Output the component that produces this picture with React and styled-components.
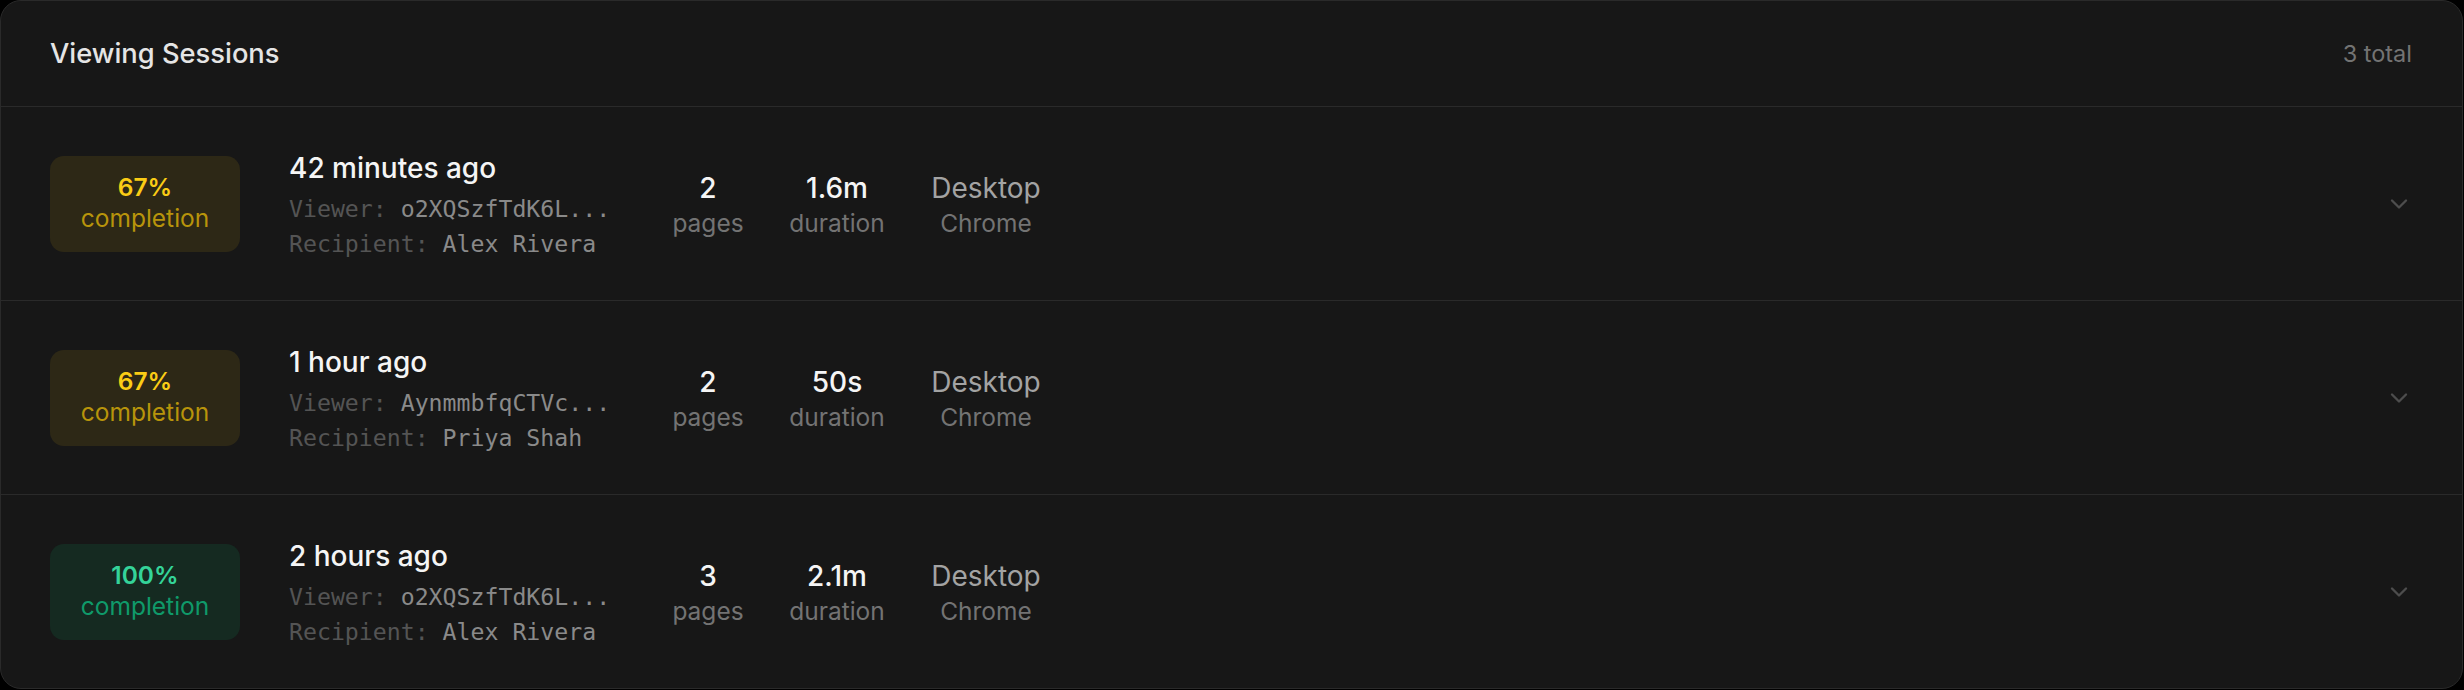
import React from "react";
import styled, { createGlobalStyle } from "styled-components";
import { ChevronDown } from "lucide-react";

const GlobalStyle = createGlobalStyle`
  html, body {
    margin: 0;
    padding: 0;
    background: #000;
  }
  body {
    font-family: Inter, "Noto Sans", sans-serif;
  }
`;

const Card = styled.section`
  box-sizing: border-box;
  width: 2463px;
  background: #171717;
  border: 1px solid #2a2a2a;
  border-radius: 21px;
  overflow: hidden;
`;

const Header = styled.header`
  display: flex;
  align-items: center;
  justify-content: space-between;
  height: 105px;
  padding: 0 50px 0 49px;
  border-bottom: 1px solid #2a2a2a;
`;

const Title = styled.h2`
  margin: 0;
  font-size: 27.3px;
  line-height: 42px;
  font-weight: 500;
  color: #e5e5e5;
`;

const Total = styled.span`
  font-size: 23.5px;
  line-height: 35px;
  color: #737373;
`;

const Row = styled.div`
  display: flex;
  align-items: center;
  height: 193px;
  padding: 0 49px;
  & + & {
    border-top: 1px solid #2a2a2a;
  }
`;

const Badge = styled.div`
  display: flex;
  flex-direction: column;
  align-items: center;
  justify-content: center;
  width: 190px;
  height: 96px;
  flex-shrink: 0;
  border-radius: 14px;
  background: ${(p) => (p.done ? "#152a21" : "#2d2816")};
`;

const Percent = styled.span`
  font-size: 24.5px;
  line-height: 31px;
  font-weight: 600;
  color: ${(p) => (p.done ? "#34d399" : "#facc15")};
`;

const BadgeLabel = styled.span`
  font-size: 24.5px;
  line-height: 31px;
  margin-bottom: 2px;
  color: ${(p) => (p.done ? "#0f9a6a" : "#b8940b")};
`;

const Info = styled.div`
  display: flex;
  flex-direction: column;
  width: 345px;
  margin-left: 49px;
  flex-shrink: 0;
`;

const When = styled.div`
  font-size: 28px;
  line-height: 42px;
  font-weight: 500;
  color: #f5f5f5;
  margin-bottom: 2px;
`;

const MonoLine = styled.div`
  font-family: "DejaVu Sans Mono", "Liberation Mono", monospace;
  font-size: 23.2px;
  line-height: 35px;
  color: #8a8a8a;
  white-space: nowrap;
`;

const MonoLabel = styled.span`
  color: #545454;
`;

const Stats = styled.div`
  display: flex;
  align-items: center;
  gap: 34px;
  margin-left: 34px;
`;

const Stat = styled.div`
  display: flex;
  flex-direction: column;
  align-items: center;
  width: ${(p) => p.w}px;
  text-align: center;
`;

const StatValue = styled.span`
  font-size: 28px;
  line-height: 39px;
  font-weight: ${(p) => (p.muted ? 400 : 500)};
  color: ${(p) => (p.muted ? "#a3a3a3" : "#f5f5f5")};
`;

const StatLabel = styled.span`
  font-size: 24.5px;
  line-height: 31px;
  color: #737373;
`;

const Toggle = styled.div`
  margin-left: auto;
  display: flex;
  align-items: center;
  color: #4d4d4d;
`;

const sessions = [
  {
    pct: 67,
    when: "42 minutes ago",
    viewer: "o2XQSzfTdK6L...",
    recipient: "Alex Rivera",
    pages: 2,
    duration: "1.6m",
  },
  {
    pct: 67,
    when: "1 hour ago",
    viewer: "AynmmbfqCTVc...",
    recipient: "Priya Shah",
    pages: 2,
    duration: "50s",
  },
  {
    pct: 100,
    when: "2 hours ago",
    viewer: "o2XQSzfTdK6L...",
    recipient: "Alex Rivera",
    pages: 3,
    duration: "2.1m",
  },
];

export default function App() {
  return (
    <>
      <GlobalStyle />
      <Card>
        <Header>
          <Title>Viewing Sessions</Title>
          <Total>3 total</Total>
        </Header>
        {sessions.map((s, i) => {
          const done = s.pct === 100;
          return (
            <Row key={i}>
              <Badge done={done}>
                <Percent done={done}>{s.pct}%</Percent>
                <BadgeLabel done={done}>completion</BadgeLabel>
              </Badge>
              <Info>
                <When>{s.when}</When>
                <MonoLine>
                  <MonoLabel>Viewer:</MonoLabel> {s.viewer}
                </MonoLine>
                <MonoLine>
                  <MonoLabel>Recipient:</MonoLabel> {s.recipient}
                </MonoLine>
              </Info>
              <Stats>
                <Stat w={80}>
                  <StatValue>{s.pages}</StatValue>
                  <StatLabel>pages</StatLabel>
                </Stat>
                <Stat w={110}>
                  <StatValue>{s.duration}</StatValue>
                  <StatLabel>duration</StatLabel>
                </Stat>
                <Stat w={120}>
                  <StatValue muted>Desktop</StatValue>
                  <StatLabel>Chrome</StatLabel>
                </Stat>
              </Stats>
              <Toggle>
                <ChevronDown size={28} strokeWidth={2} />
              </Toggle>
            </Row>
          );
        })}
      </Card>
    </>
  );
}
